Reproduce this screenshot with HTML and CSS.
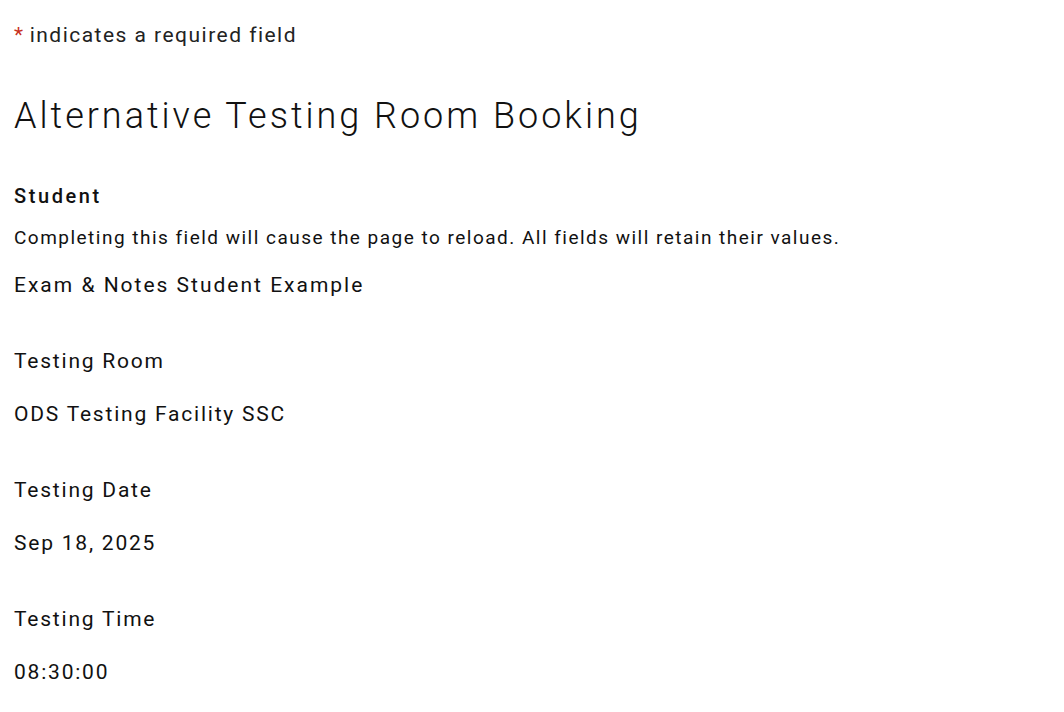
FILE: index.html
```html
<!DOCTYPE html>
<html lang="en">
<head>
<meta charset="utf-8">
<title>Alternative Testing Room Booking</title>
<link rel="stylesheet" href="styles.css">
</head>
<body>
<main class="page">
  <p class="required-note"><span class="star">*</span> indicates a required field</p>
  <h1 class="title">Alternative Testing Room Booking</h1>
  <section class="field field-student">
    <div class="label">Student</div>
    <div class="help">Completing this field will cause the page to reload. All fields will retain their values.</div>
    <div class="value">Exam &amp; Notes Student Example</div>
  </section>
  <section class="field">
    <div class="label">Testing Room</div>
    <div class="value">ODS Testing Facility SSC</div>
  </section>
  <section class="field">
    <div class="label">Testing Date</div>
    <div class="value">Sep 18, 2025</div>
  </section>
  <section class="field">
    <div class="label">Testing Time</div>
    <div class="value">08:30:00</div>
  </section>
</main>
</body>
</html>
```

FILE: styles.css
```css
html, body {
  margin: 0;
  padding: 0;
  background: #ffffff;
}
body {
  font-family: Roboto, "Liberation Sans", sans-serif;
  color: #111111;
}
.page {
  padding: 22px 14px 0 14px;
}
.required-note {
  margin: 0;
  font-size: 21px;
  line-height: 26px;
  letter-spacing: 0.07em;
  color: #222222;
}
.star {
  color: #c8321e;
  letter-spacing: 0;
}
.title {
  margin: 46px 0 0 0;
  font-size: 36px;
  font-weight: 300;
  line-height: 44px;
  letter-spacing: 0.083em;
}
.field {
  margin-top: 48px;
}
.field-student {
  margin-top: 44px;
}
.label {
  font-size: 21px;
  line-height: 28px;
  letter-spacing: 0.085em;
}
.field-student .label {
  font-size: 20px;
  font-weight: 500;
  letter-spacing: 0.13em;
}
.help {
  font-size: 19px;
  line-height: 24px;
  margin-top: 16px;
  letter-spacing: 0.078em;
}
.value {
  font-size: 21px;
  line-height: 28px;
  margin-top: 25px;
  letter-spacing: 0.085em;
}
.field-student .value {
  margin-top: 21px;
  letter-spacing: 0.095em;
}
```
